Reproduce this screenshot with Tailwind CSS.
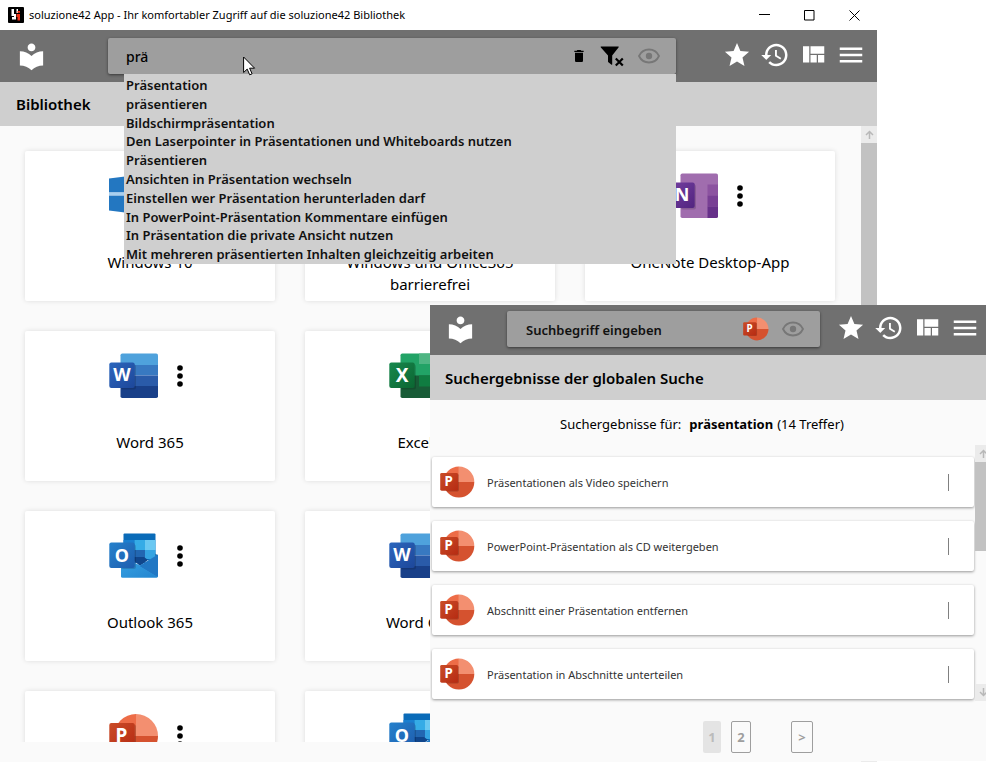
<!DOCTYPE html>
<html lang="de">
<head>
    <meta charset="UTF-8">
    <meta name="viewport" content="width=device-width, initial-scale=1.0">
    <title>soluzione42 App</title>
    <script src="https://cdn.jsdelivr.net/npm/@tailwindcss/browser@4"></script>
</head>
<body class="relative h-screen overflow-hidden bg-white font-['Noto_Sans',sans-serif] text-black">

<!-- Gradients and clips, must stay rendered -->
<svg class="absolute h-0 w-0" aria-hidden="true">
    <defs>
        <linearGradient id="gWord" x1="0" y1="0" x2="1" y2="1"><stop offset="0" stop-color="#2b66bd"/><stop offset="1" stop-color="#1d479a"/></linearGradient>
        <linearGradient id="gExcel" x1="0" y1="0" x2="1" y2="1"><stop offset="0" stop-color="#18884e"/><stop offset="1" stop-color="#0b6631"/></linearGradient>
        <linearGradient id="gOutlook" x1="0" y1="0" x2="1" y2="1"><stop offset="0" stop-color="#2581cc"/><stop offset="1" stop-color="#1e5dae"/></linearGradient>
        <linearGradient id="gNote" x1="0" y1="0" x2="1" y2="1"><stop offset="0" stop-color="#7440a0"/><stop offset="1" stop-color="#522480"/></linearGradient>
        <linearGradient id="gPpt" x1="0" y1="0" x2="1" y2="1"><stop offset="0" stop-color="#ca4c28"/><stop offset="1" stop-color="#b62b12"/></linearGradient>
        <linearGradient id="gMail" x1="0" y1="0" x2="1" y2="1"><stop offset="0" stop-color="#37a3e4"/><stop offset="1" stop-color="#2485cf"/></linearGradient>
        <clipPath id="cBack"><rect x="11.5" y="0.5" width="37.5" height="44.5" rx="1.8"/></clipPath>
        <clipPath id="cRound"><circle cx="27" cy="23" r="22"/></clipPath>
    </defs>
</svg>

<!-- Icon sprite -->
<svg class="hidden">
    <symbol id="i-library" viewBox="0 0 24 24"><path fill="currentColor" d="M12 11.55C9.64 9.35 6.48 8 3 8v11c3.48 0 6.64 1.35 9 3.55 2.36-2.19 5.52-3.55 9-3.55V8c-3.48 0-6.64 1.35-9 3.55zM12 8c1.66 0 3-1.34 3-3s-1.34-3-3-3-3 1.34-3 3 1.34 3 3 3z"/></symbol>
    <symbol id="i-star" viewBox="-.4 -.4 24.8 24.8"><path fill="currentColor" d="M12 17.27 18.18 21l-1.64-7.03L22 9.24l-7.19-.61L12 2 9.19 8.63 2 9.24l5.46 4.73L5.82 21z"/></symbol>
    <symbol id="i-history" viewBox="0 0 24 24"><path fill="currentColor" d="M13 3c-4.97 0-9 4.03-9 9H1l3.89 3.89.07.14L9 12H6c0-3.87 3.13-7 7-7s7 3.13 7 7-3.13 7-7 7c-1.93 0-3.68-.79-4.94-2.06l-1.42 1.42C8.27 19.99 10.51 21 13 21c4.97 0 9-4.03 9-9s-4.03-9-9-9zm-1 5v5l4.28 2.54.72-1.21-3.5-2.08V8z"/></symbol>
    <symbol id="i-quilt" viewBox="0 0 24 24"><path fill="currentColor" d="M10 18h5v-6h-5v6zm-6 0h5V5H4v13zm12 0h5v-6h-5v6zM10 5v6h11V5H10z"/></symbol>
    <symbol id="i-menu" viewBox="0 0 24 24"><path fill="currentColor" d="M3 18h18v-2H3zm0-5h18v-2H3zm0-7v2h18V6z"/></symbol>
    <symbol id="i-trash" viewBox="0 0 24 24"><path fill="currentColor" d="M6 19c0 1.1.9 2 2 2h8c1.1 0 2-.9 2-2V7H6zM19 4h-3.500l-1-1h-5l-1 1H5v2h14z"/></symbol>
    <symbol id="i-filter" viewBox="0 0 24 24"><path fill="currentColor" d="M1.200 2.500h17c.6 0 .7.500.3 1l-6.300 8v8.800c0 .6-.5.700-1 .3l-2.800-2.300c-.3-.3-.4-.5-.4-.9v-6L.9 3.500c-.4-.5-.3-1 .3-1z"/><path d="m15.800 14.500 7 7m0-7-7 7" stroke="currentColor" stroke-width="2.200"/></symbol>
    <symbol id="i-eye" viewBox="0 0 24 24"><path fill="none" stroke="currentColor" stroke-width="1.800" d="M2 12c1.900-4 5.600-6.500 10-6.500S20.100 8 22 12c-1.900 4-5.600 6.500-10 6.500S3.900 16 2 12z"/><circle cx="12" cy="12" r="3.200" fill="currentColor"/></symbol>
    <symbol id="i-dots" viewBox="0 0 24 24"><circle cx="12" cy="4" r="2.800"/><circle cx="12" cy="12" r="2.800"/><circle cx="12" cy="20" r="2.800"/></symbol>
    <symbol id="i-up" viewBox="0 0 16 17"><path fill="none" stroke="currentColor" stroke-width="1.500" d="M8.500 13V5.500M5 9l3.500-3.500L12 9"/></symbol>
    <symbol id="i-windows" viewBox="0 0 50 46">
        <path fill="#2377c1" d="M0 5.500 20 3v16.500H0zM22 2.700 49 0v19.500H22zM0 22.500h20V40L0 37.500zM22 22.500h27V43L22 40.300z"/>
        <path fill="#a9d0f0" d="M0 19.500h49v2.500H0z"/>
    </symbol>
    <symbol id="i-word" viewBox="0 0 50 46">
        <g clip-path="url(#cBack)"><path fill="#4fa2dc" d="M11 0h39v12H11z"/><path fill="#3879c1" d="M11 12h39v10.500H11z"/><path fill="#2a5ba9" d="M11 22.500h39V33H11z"/><path fill="#194089" d="M11 33h39v13H11z"/></g>
        <rect x="12" y="11.500" width="15" height="25" rx="2" fill="#000" opacity=".15"/>
        <rect x="0.300" y="9.500" width="25.400" height="25.400" rx="2" fill="url(#gWord)"/>
        <text x="13" y="28" text-anchor="middle" font-size="18" font-weight="700" fill="#fff">W</text>
    </symbol>
    <symbol id="i-excel" viewBox="0 0 50 46">
        <g clip-path="url(#cBack)"><path fill="#22a366" d="M11 0h39v12H11z"/><path fill="#4fb583" d="M30 0h20v12H30z"/><path fill="#22a366" d="M11 11h39v12H11z"/><path fill="#185c37" d="M11 22.500h39V46H11z"/><path fill="#107c41" d="M30 22.500h20v11H30z"/></g>
        <rect x="12" y="11.500" width="15" height="25" rx="2" fill="#000" opacity=".15"/>
        <rect x="0.300" y="9.500" width="25.400" height="25.400" rx="2" fill="url(#gExcel)"/>
        <text x="13" y="28.500" text-anchor="middle" font-size="19" font-weight="700" fill="#fff">X</text>
    </symbol>
    <symbol id="i-outlook" viewBox="0 0 50 46">
        <path fill="#123c6e" d="M46 20.500 49 22.500 44 26z"/>
        <path fill="#0a6bb8" d="M15.500.5h30a1 1 0 0 1 1 1V27h-32V1.500a1 1 0 0 1 1-1z"/>
        <path fill="#1a7fd0" d="M14.500 7h11v10h-11z"/><path fill="#35abe6" d="M25.500 7h10.500v10H25.500z"/><path fill="#6ac8f2" d="M36 7h10.500v10H36z"/>
        <path fill="#2267b2" d="M14.500 17H36v13H14.500z"/><path fill="#35a4e2" d="M36 17h10.500v9H36z"/>
        <path fill="#10468c" d="M21 24h14l4 3-8 6z"/>
        <path fill="#2f96dc" d="M12 22.500 31 32.500 49 21.500V43a1.500 1.500 0 0 1-1.500 1.500H13.500A1.500 1.500 0 0 1 12 43z"/>
        <path fill="#2177c4" d="M49 21.500V43l-.6.900L30.500 33z"/>
        <path fill="url(#gMail)" d="M12 22.500 48.500 44 47.500 44.500H13.500A1.500 1.500 0 0 1 12 43z"/>
        <rect x="12" y="11.500" width="15" height="24.500" rx="2" fill="#000" opacity=".15"/>
        <rect x="0.300" y="9.500" width="25.400" height="25.400" rx="2" fill="url(#gOutlook)"/>
        <text x="12.800" y="28.500" text-anchor="middle" font-size="18" font-weight="700" fill="#fff">O</text>
    </symbol>
    <symbol id="i-onenote" viewBox="0 0 50 46">
        <g clip-path="url(#cBack)"><path fill="#a06dae" d="M11 0h39v46H11z"/><path fill="#8c53a0" d="M38.500 11.500H50v11H38.500z"/><path fill="#783f94" d="M38.500 22.500H50v11H38.500z"/><path fill="#663089" d="M38.500 33.500H50V46H38.500z"/></g>
        <rect x="12" y="11.500" width="15" height="25" rx="2" fill="#000" opacity=".15"/>
        <rect x="0.300" y="9.500" width="25.400" height="25.400" rx="2" fill="url(#gNote)"/>
        <text x="13" y="28" text-anchor="middle" font-size="18" font-weight="700" fill="#fff">N</text>
    </symbol>
    <symbol id="i-ppt" viewBox="0 0 50 46">
        <g clip-path="url(#cRound)"><path fill="#ed6c47" d="M0 0h27v23H0z"/><path fill="#f38f70" d="M27 0h23v23H27z"/><path fill="#d5522f" d="M0 23h50v23H0z"/><rect x="3" y="11.500" width="24" height="25" rx="2" opacity=".2"/></g>
        <rect x="0.300" y="10" width="25.400" height="25.400" rx="2" fill="url(#gPpt)"/>
        <text x="12.500" y="28.500" text-anchor="middle" font-size="19" font-weight="700" fill="#fff">P</text>
    </symbol>
</svg>

<!-- Main window -->
<div class="absolute inset-y-0 left-0 right-[109px] flex flex-col bg-[#fafafa]">
    <div class="flex h-[30px] shrink-0 items-center bg-white pl-2">
        <svg class="h-4 w-4" viewBox="0 0 16 16"><rect width="16" height="16" rx="1"/><path fill="#fff" d="M3.500 2H6v5h2v5.500H4V10h2V9H3.500zM8.500 2H10v4H8.500z"/><path fill="#f33216" d="M9.500 4H12v1.800H9.500zM8.500 7H12v6.500H9.500V10h-1z"/></svg>
        <span class="ml-[5px] flex-1 text-[11px]">soluzione42 App - Ihr komfortabler Zugriff auf die soluzione42 Bibliothek</span>
        <button class="flex h-[30px] w-[45px] items-center justify-center" aria-label="Minimieren"><svg class="h-[11px] w-[11px]" viewBox="0 0 11 11"><path d="M0 4.500h11" stroke="#000"/></svg></button>
        <button class="flex h-[30px] w-[45px] items-center justify-center" aria-label="Maximieren"><svg class="h-[11px] w-[11px]" viewBox="0 0 11 11"><path d="M.5.5h9.500v9.500H.5z" fill="none" stroke="#000"/></svg></button>
        <button class="flex h-[30px] w-[45px] items-center justify-center" aria-label="Schließen"><svg class="h-[11px] w-[11px]" viewBox="0 0 11 11"><path d="m.5.5 10 10m0-10-10 10" stroke="#000"/></svg></button>
    </div>

    <header class="relative z-10 flex h-[52px] shrink-0 items-center bg-[#707070] pl-4 pr-[11px] text-white">
        <a href="#" aria-label="Bibliothek"><svg class="h-[31px] w-[31px]"><use href="#i-library"/></svg></a>
        <div class="relative ml-[61px] mr-[46px] flex h-9 flex-1 items-center rounded-xs bg-[#9e9e9e] pl-[18px] pr-[15px] text-black shadow-[0_1px_3px_rgba(0,0,0,0.5)]">
            <input type="text" value="prä" aria-label="Suchbegriff" class="min-w-0 flex-1 bg-transparent pt-[2px] text-[14px] font-medium leading-5 outline-none">
            <button aria-label="Eingabe löschen"><svg class="h-4 w-4"><use href="#i-trash"/></svg></button>
            <button class="ml-[13px]" aria-label="Filter entfernen"><svg class="h-6 w-6"><use href="#i-filter"/></svg></button>
            <button class="ml-[13px] text-[#777]" aria-label="Ansicht"><svg class="h-6 w-6"><use href="#i-eye"/></svg></button>

            <!-- Suggestions -->
            <ul role="listbox" aria-label="Vorschläge" class="absolute left-4 right-0 top-full grid h-[190px] auto-rows-fr bg-[#cfcfcf] pl-[2px] pt-[2px] text-[13px] font-semibold leading-[18px] text-[#111]">
                <li role="option">Präsentation</li>
                <li role="option">präsentieren</li>
                <li role="option">Bildschirmpräsentation</li>
                <li role="option">Den Laserpointer in Präsentationen und Whiteboards nutzen</li>
                <li role="option">Präsentieren</li>
                <li role="option">Ansichten in Präsentation wechseln</li>
                <li role="option">Einstellen wer Präsentation herunterladen darf</li>
                <li role="option">In PowerPoint-Präsentation Kommentare einfügen</li>
                <li role="option">In Präsentation die private Ansicht nutzen</li>
                <li role="option">Mit mehreren präsentierten Inhalten gleichzeitig arbeiten</li>
            </ul>
        </div>
        <nav class="flex gap-2 pb-[2px]">
            <button aria-label="Favoriten"><svg class="h-[30px] w-[30px]"><use href="#i-star"/></svg></button>
            <button aria-label="Verlauf"><svg class="h-[30px] w-[30px]"><use href="#i-history"/></svg></button>
            <button aria-label="Ansicht wechseln"><svg class="h-[30px] w-[30px]"><use href="#i-quilt"/></svg></button>
            <button aria-label="Menü"><svg class="h-[30px] w-[30px]"><use href="#i-menu"/></svg></button>
        </nav>
    </header>

    <h1 class="flex h-11 shrink-0 items-center bg-[#cfcfcf] pl-4 text-[15px] font-semibold">Bibliothek</h1>

    <div class="flex min-h-0 flex-1">
        <main class="mb-5 grid flex-1 auto-rows-[150px] grid-cols-3 content-start gap-[30px] overflow-hidden pl-[25px] pr-[26px] pt-[25px] text-center text-[15px] leading-[22px]">
            <article class="rounded-xs bg-white pt-[22px] shadow-[0_0_5px_rgba(0,0,0,0.12)]">
                <div class="flex items-center justify-center gap-[9px]">
                    <svg class="h-[46px] w-[50px]"><use href="#i-windows"/></svg>
                    <button aria-label="Mehr"><svg class="h-6 w-6"><use href="#i-dots"/></svg></button>
                </div>
                <h2 class="mt-8">Windows 10</h2>
            </article>
            <article class="rounded-xs bg-white pt-[22px] shadow-[0_0_5px_rgba(0,0,0,0.12)]">
                <div class="flex items-center justify-center gap-[9px]">
                    <svg class="h-[46px] w-[50px]"><use href="#i-windows"/></svg>
                    <button aria-label="Mehr"><svg class="h-6 w-6"><use href="#i-dots"/></svg></button>
                </div>
                <h2 class="mt-8 px-10">Windows und Office365 barrierefrei</h2>
            </article>
            <article class="rounded-xs bg-white pt-[22px] shadow-[0_0_5px_rgba(0,0,0,0.12)]">
                <div class="flex items-center justify-center gap-[9px]">
                    <svg class="h-[46px] w-[50px]"><use href="#i-onenote"/></svg>
                    <button aria-label="Mehr"><svg class="h-6 w-6"><use href="#i-dots"/></svg></button>
                </div>
                <h2 class="mt-8">OneNote Desktop-App</h2>
            </article>
            <article class="col-start-1 rounded-xs bg-white pt-[22px] shadow-[0_0_5px_rgba(0,0,0,0.12)]">
                <div class="flex items-center justify-center gap-[9px]">
                    <svg class="h-[46px] w-[50px]"><use href="#i-word"/></svg>
                    <button aria-label="Mehr"><svg class="h-6 w-6"><use href="#i-dots"/></svg></button>
                </div>
                <h2 class="mt-8">Word 365</h2>
            </article>
            <article class="rounded-xs bg-white pt-[22px] shadow-[0_0_5px_rgba(0,0,0,0.12)]">
                <div class="flex items-center justify-center gap-[9px]">
                    <svg class="h-[46px] w-[50px]"><use href="#i-excel"/></svg>
                    <button aria-label="Mehr"><svg class="h-6 w-6"><use href="#i-dots"/></svg></button>
                </div>
                <h2 class="mt-8">Excel 365</h2>
            </article>
            <article class="col-start-1 rounded-xs bg-white pt-[22px] shadow-[0_0_5px_rgba(0,0,0,0.12)]">
                <div class="flex items-center justify-center gap-[9px]">
                    <svg class="h-[46px] w-[50px]"><use href="#i-outlook"/></svg>
                    <button aria-label="Mehr"><svg class="h-6 w-6"><use href="#i-dots"/></svg></button>
                </div>
                <h2 class="mt-8">Outlook 365</h2>
            </article>
            <article class="rounded-xs bg-white pt-[22px] shadow-[0_0_5px_rgba(0,0,0,0.12)]">
                <div class="flex items-center justify-center gap-[9px]">
                    <svg class="h-[46px] w-[50px]"><use href="#i-word"/></svg>
                    <button aria-label="Mehr"><svg class="h-6 w-6"><use href="#i-dots"/></svg></button>
                </div>
                <h2 class="mt-8">Word Online</h2>
            </article>
            <article class="col-start-1 rounded-xs bg-white pt-[22px] shadow-[0_0_5px_rgba(0,0,0,0.12)]">
                <div class="flex items-center justify-center gap-[9px]">
                    <svg class="h-[46px] w-[50px]"><use href="#i-ppt"/></svg>
                    <button aria-label="Mehr"><svg class="h-6 w-6"><use href="#i-dots"/></svg></button>
                </div>
            </article>
            <article class="rounded-xs bg-white pt-[22px] shadow-[0_0_5px_rgba(0,0,0,0.12)]">
                <div class="flex items-center justify-center gap-[9px]">
                    <svg class="h-[46px] w-[50px]"><use href="#i-outlook"/></svg>
                    <button aria-label="Mehr"><svg class="h-6 w-6"><use href="#i-dots"/></svg></button>
                </div>
            </article>
        </main>
        <div class="flex w-4 flex-col bg-[#ebebeb] text-[#b8b8b8]">
            <svg class="h-[17px] w-4"><use href="#i-up"/></svg>
            <div class="h-1/2 bg-[#c2c2c2]"></div>
        </div>
    </div>
</div>

<!-- Search results window -->
<div class="absolute bottom-px left-[430px] right-0 top-[305px] flex flex-col overflow-hidden bg-[#fafafa]">
    <header class="flex h-[50px] shrink-0 items-center bg-[#707070] pb-[2px] pl-[15px] pr-[6px] text-white">
        <a href="#" aria-label="Bibliothek"><svg class="h-[31px] w-[31px]"><use href="#i-library"/></svg></a>
        <div class="ml-[31px] mr-4 flex h-9 flex-1 items-center rounded-xs bg-[#9e9e9e] pl-[19px] pr-[15px] text-black shadow-[0_1px_3px_rgba(0,0,0,0.5)]">
            <input type="text" placeholder="Suchbegriff eingeben" aria-label="Suchbegriff" class="min-w-0 flex-1 bg-transparent pt-[2px] text-[13px] font-semibold leading-5 outline-none placeholder:text-[#111]">
            <svg class="h-6 w-[26px]"><use href="#i-ppt"/></svg>
            <button class="ml-3 text-[#777]" aria-label="Ansicht"><svg class="h-6 w-6"><use href="#i-eye"/></svg></button>
        </div>
        <nav class="flex gap-2 pb-[2px]">
            <button aria-label="Favoriten"><svg class="h-[30px] w-[30px]"><use href="#i-star"/></svg></button>
            <button aria-label="Verlauf"><svg class="h-[30px] w-[30px]"><use href="#i-history"/></svg></button>
            <button aria-label="Ansicht wechseln"><svg class="h-[30px] w-[30px]"><use href="#i-quilt"/></svg></button>
            <button aria-label="Menü"><svg class="h-[30px] w-[30px]"><use href="#i-menu"/></svg></button>
        </nav>
    </header>

    <h1 class="flex h-[45px] shrink-0 items-center bg-[#cfcfcf] pl-[15px] pt-[2px] text-[15px] font-semibold">Suchergebnisse der globalen Suche</h1>

    <p class="flex h-[45px] shrink-0 items-center justify-center gap-1 pr-3 pt-1 text-[13px]"><span class="mr-1">Suchergebnisse für:</span><b>präsentation</b><span>(14 Treffer)</span></p>

    <div class="flex h-64 shrink-0">
        <ul class="flex flex-1 flex-col gap-[14px] pl-[2px] pr-px pt-3 text-[11px] text-[#333]">
            <li class="flex h-[50px] shrink-0 items-center rounded-xs bg-white pl-2 shadow-[0_1px_3px_rgba(0,0,0,0.4)]">
                <svg class="h-[34px] w-[35px]"><use href="#i-ppt"/></svg><a href="#" class="ml-3 flex-1 pt-[2px]">Präsentationen als Video speichern</a><span class="mr-[25px] h-[17px] w-px bg-[#808080]"></span>
            </li>
            <li class="flex h-[50px] shrink-0 items-center rounded-xs bg-white pl-2 shadow-[0_1px_3px_rgba(0,0,0,0.4)]">
                <svg class="h-[34px] w-[35px]"><use href="#i-ppt"/></svg><a href="#" class="ml-3 flex-1 pt-[2px]">PowerPoint-Präsentation als CD weitergeben</a><span class="mr-[25px] h-[17px] w-px bg-[#808080]"></span>
            </li>
            <li class="flex h-[50px] shrink-0 items-center rounded-xs bg-white pl-2 shadow-[0_1px_3px_rgba(0,0,0,0.4)]">
                <svg class="h-[34px] w-[35px]"><use href="#i-ppt"/></svg><a href="#" class="ml-3 flex-1 pt-[2px]">Abschnitt einer Präsentation entfernen</a><span class="mr-[25px] h-[17px] w-px bg-[#808080]"></span>
            </li>
            <li class="flex h-[50px] shrink-0 items-center rounded-xs bg-white pl-2 shadow-[0_1px_3px_rgba(0,0,0,0.4)]">
                <svg class="h-[34px] w-[35px]"><use href="#i-ppt"/></svg><a href="#" class="ml-3 flex-1 pt-[2px]">Präsentation in Abschnitte unterteilen</a><span class="mr-[25px] h-[17px] w-px bg-[#808080]"></span>
            </li>
        </ul>
        <div class="flex w-[11px] flex-col overflow-hidden text-[#b8b8b8]">
            <svg class="h-[17px] w-4 bg-[#ebebeb]"><use href="#i-up"/></svg>
            <div class="h-[89px] bg-[#c2c2c2]"></div>
            <svg class="mt-auto h-[17px] w-4 -scale-y-100 bg-[#ebebeb]"><use href="#i-up"/></svg>
        </div>
    </div>

    <nav class="mt-5 flex items-start justify-center pl-[100px] text-[13px] font-bold text-[#9e9e9e]" aria-label="Seiten">
        <button class="h-8 w-[18px] rounded-xs bg-[#e4e4e4] pt-[2px] text-[#bbb]" disabled>1</button>
        <button class="ml-[10px] h-8 w-5 rounded-xs border border-[#9e9e9e] pt-[2px]">2</button>
        <button class="ml-10 h-8 w-[22px] rounded-xs border border-[#9e9e9e] pt-[2px]">&gt;</button>
    </nav>
</div>

<!-- Mouse pointer -->
<svg class="absolute left-[243px] top-[56px] z-20 h-5 w-[13px]" viewBox="0 0 13 20"><path fill="#fff" stroke="#000" d="M.6 1v15.500l3.600-3.400 2.500 5.700 2.400-1-2.500-5.600h5z"/></svg>
</body>
</html>
